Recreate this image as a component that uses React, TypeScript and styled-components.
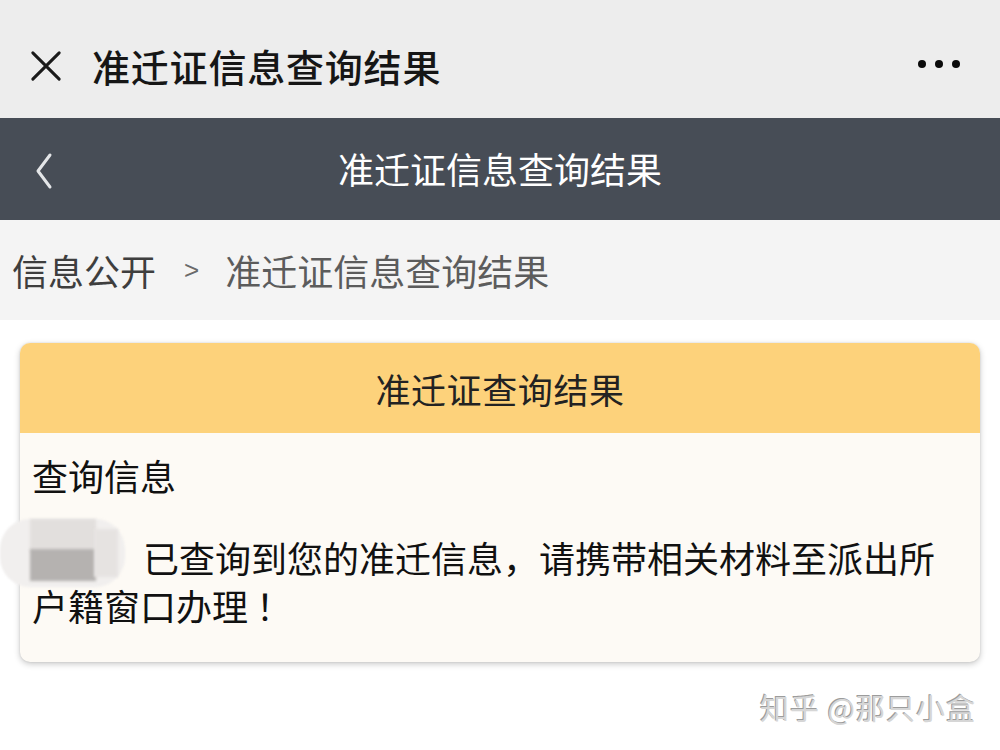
import styled, { createGlobalStyle } from "styled-components";

const GlobalStyle = createGlobalStyle`
  html, body {
    margin: 0;
    padding: 0;
    background: #ffffff;
  }
  body {
    font-family: "Noto Sans CJK SC", "Noto Sans", sans-serif;
  }
`;

const App = () => {
  return (
    <>
      <GlobalStyle />
      <StyledPage>
        <StyledTopBar>
          <StyledCloseIcon viewBox="0 0 34 34">
            <path d="M3 3 L31 31 M31 3 L3 31" stroke="#1a1a1a" strokeWidth="3.2" strokeLinecap="round" />
          </StyledCloseIcon>
          <StyledTopTitle>准迁证信息查询结果</StyledTopTitle>
          <StyledMore>
            <span />
            <span />
            <span />
          </StyledMore>
        </StyledTopBar>

        <StyledNavBar>
          <StyledBackIcon viewBox="0 0 20 38">
            <path d="M16 3 L4 19 L16 35" stroke="#e4e6e8" strokeWidth="3" fill="none" strokeLinecap="round" strokeLinejoin="round" />
          </StyledBackIcon>
          <StyledNavTitle>准迁证信息查询结果</StyledNavTitle>
        </StyledNavBar>

        <StyledCrumbs>
          <StyledCrumb>信息公开</StyledCrumb>
          <StyledCrumbSep>&gt;</StyledCrumbSep>
          <StyledCrumb muted>准迁证信息查询结果</StyledCrumb>
        </StyledCrumbs>

        <StyledContent>
          <StyledCard>
            <StyledCardHeader>准迁证查询结果</StyledCardHeader>
            <StyledCardBody>
              <StyledLabel>查询信息</StyledLabel>
              <StyledMessage>
                <StyledIndent />
                已查询到您的准迁信息，请携带相关材料至派出所户籍窗口办理 ！
              </StyledMessage>
            </StyledCardBody>
          </StyledCard>
          <StyledRedact>
            <StyledBlob />
            <StyledPixel tone="#e2dfdd" left={30} top={2} w={66} h={32} />
            <StyledPixel tone="#b5b2b0" left={30} top={32} w={66} h={32} />
            <StyledPixel tone="#e6e3e1" left={94} top={12} w={24} h={48} />
          </StyledRedact>
        </StyledContent>

        <StyledWatermark>知乎 @那只小盒</StyledWatermark>
      </StyledPage>
    </>
  );
};

const StyledPage = styled.div`
  width: 1000px;
  height: 750px;
  overflow: hidden;
  display: flex;
  flex-direction: column;
  background: #ffffff;
`;

const StyledTopBar = styled.div`
  height: 118px;
  background: #ededed;
  display: flex;
  align-items: center;
  padding: 0 40px 0 30px;
  box-sizing: border-box;
`;

const StyledCloseIcon = styled.svg`
  width: 32px;
  height: 32px;
  margin-top: 14px;
  margin-right: 30px;
`;

const StyledTopTitle = styled.div`
  flex: 1;
  font-size: 38px;
  font-weight: 500;
  color: #161616;
  padding-top: 12px;
  letter-spacing: 0.8px;
`;

const StyledMore = styled.div`
  display: flex;
  gap: 9px;
  margin-top: 10px;
  span {
    width: 8px;
    height: 8px;
    border-radius: 50%;
    background: #0a0a0a;
  }
`;

const StyledNavBar = styled.div`
  height: 102px;
  background: #474d56;
  display: flex;
  align-items: center;
  justify-content: center;
  position: relative;
`;

const StyledBackIcon = styled.svg`
  position: absolute;
  left: 34px;
  top: 34px;
  width: 20px;
  height: 38px;
`;

const StyledNavTitle = styled.div`
  font-size: 36px;
  color: #ffffff;
  margin-top: -2px;
`;

const StyledCrumbs = styled.div`
  height: 100px;
  background: #f4f4f4;
  display: flex;
  align-items: center;
  padding: 0 12px;
  box-sizing: border-box;
`;

const StyledCrumb = styled.span<{ muted?: boolean }>`
  font-size: 36px;
  color: ${({ muted }) => (muted ? "#5c5c5c" : "#3e3e3e")};
`;

const StyledCrumbSep = styled.span`
  font-family: "Liberation Sans", sans-serif;
  font-size: 26px;
  color: #6a6a6a;
  margin: 0 26px 0 28px;
`;

const StyledContent = styled.div`
  position: relative;
  padding: 23px 20px 0;
`;

const StyledCard = styled.div`
  border-radius: 10px;
  overflow: hidden;
  background: #fdfaf5;
  box-shadow: 0 2px 6px rgba(0, 0, 0, 0.22), 0 0 2px rgba(0, 0, 0, 0.12);
`;

const StyledCardHeader = styled.div`
  height: 90px;
  background: #fdd27b;
  display: flex;
  align-items: center;
  justify-content: center;
  font-size: 35px;
  color: #222222;
  letter-spacing: 0.6px;
`;

const StyledCardBody = styled.div`
  padding: 18px 22px 33px 12px;
  color: #111111;
`;

const StyledLabel = styled.div`
  font-size: 36px;
  line-height: 48px;
  margin-bottom: 34px;
`;

const StyledMessage = styled.div`
  font-size: 36px;
  line-height: 48px;
`;

const StyledIndent = styled.span`
  display: inline-block;
  width: 111px;
`;

const StyledRedact = styled.div`
  position: absolute;
  left: 0;
  top: 197px;
  width: 125px;
  height: 70px;
`;

const StyledBlob = styled.div`
  position: absolute;
  inset: 2px 0 0 0;
  border-radius: 30px;
  background: #f1efee;
  filter: blur(1px);
`;

const StyledPixel = styled.div<{ tone: string; left: number; top: number; w: number; h: number }>`
  position: absolute;
  left: ${({ left }) => left}px;
  top: ${({ top }) => top}px;
  width: ${({ w }) => w}px;
  height: ${({ h }) => h}px;
  background: ${({ tone }) => tone};
  filter: blur(1.5px);
`;

const StyledWatermark = styled.div`
  align-self: flex-end;
  margin: 24px 24px 0 0;
  font-size: 29px;
  color: #d6d6d6;
  text-shadow: -1px -1px 0 #9c9c9c, 1px 1px 0 #ffffff;
  letter-spacing: 1px;
`;

export default App;
